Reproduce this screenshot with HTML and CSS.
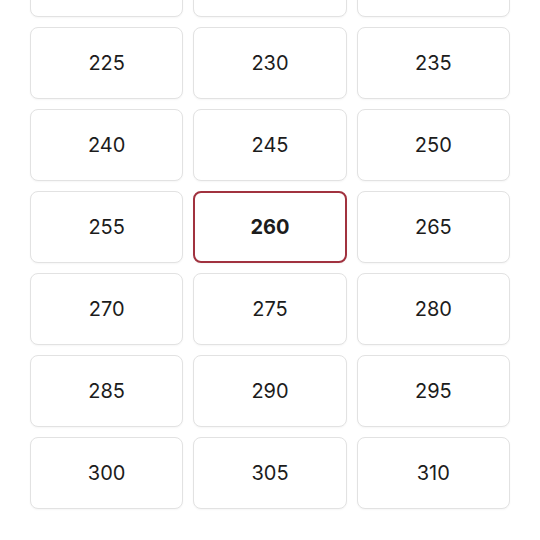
FILE: index.html
```html
<!DOCTYPE html>
<html lang="en">
<head>
    <meta charset="UTF-8">
    <meta name="viewport" content="width=device-width, initial-scale=1.0">
    <title>Pick a value</title>
    <link rel="stylesheet" href="styles.css">
</head>
<body>
    <div class="picker">
        <div class="options">
            <button class="option">210</button>
            <button class="option">215</button>
            <button class="option">220</button>
            <button class="option">225</button>
            <button class="option">230</button>
            <button class="option">235</button>
            <button class="option">240</button>
            <button class="option">245</button>
            <button class="option">250</button>
            <button class="option">255</button>
            <button class="option selected">260</button>
            <button class="option">265</button>
            <button class="option">270</button>
            <button class="option">275</button>
            <button class="option">280</button>
            <button class="option">285</button>
            <button class="option">290</button>
            <button class="option">295</button>
            <button class="option">300</button>
            <button class="option">305</button>
            <button class="option">310</button>
        </div>
    </div>
</body>
</html>
```

FILE: styles.css
```css
body, html {
    margin: 0;
    padding: 0;
    background: #fff;
    font-family: Inter, "Noto Sans", sans-serif;
    color: #1c1c1c;
    overflow: hidden;
}
.picker {
    padding: 0 30px 31px;
    margin-top: -55px;
}
.options {
    display: grid;
    grid-template-columns: repeat(3, 1fr);
    grid-auto-rows: 72px;
    gap: 10px;
}
.option {
    font-family: inherit;
    font-size: 20px;
    color: inherit;
    background: #fff;
    border: 1px solid #e2e2e2;
    border-radius: 8px;
    box-shadow: 0 1px 2px rgba(0, 0, 0, 0.04);
    cursor: pointer;
}
.option.selected {
    border: 2px solid #a1323f;
    font-weight: 700;
}
```
